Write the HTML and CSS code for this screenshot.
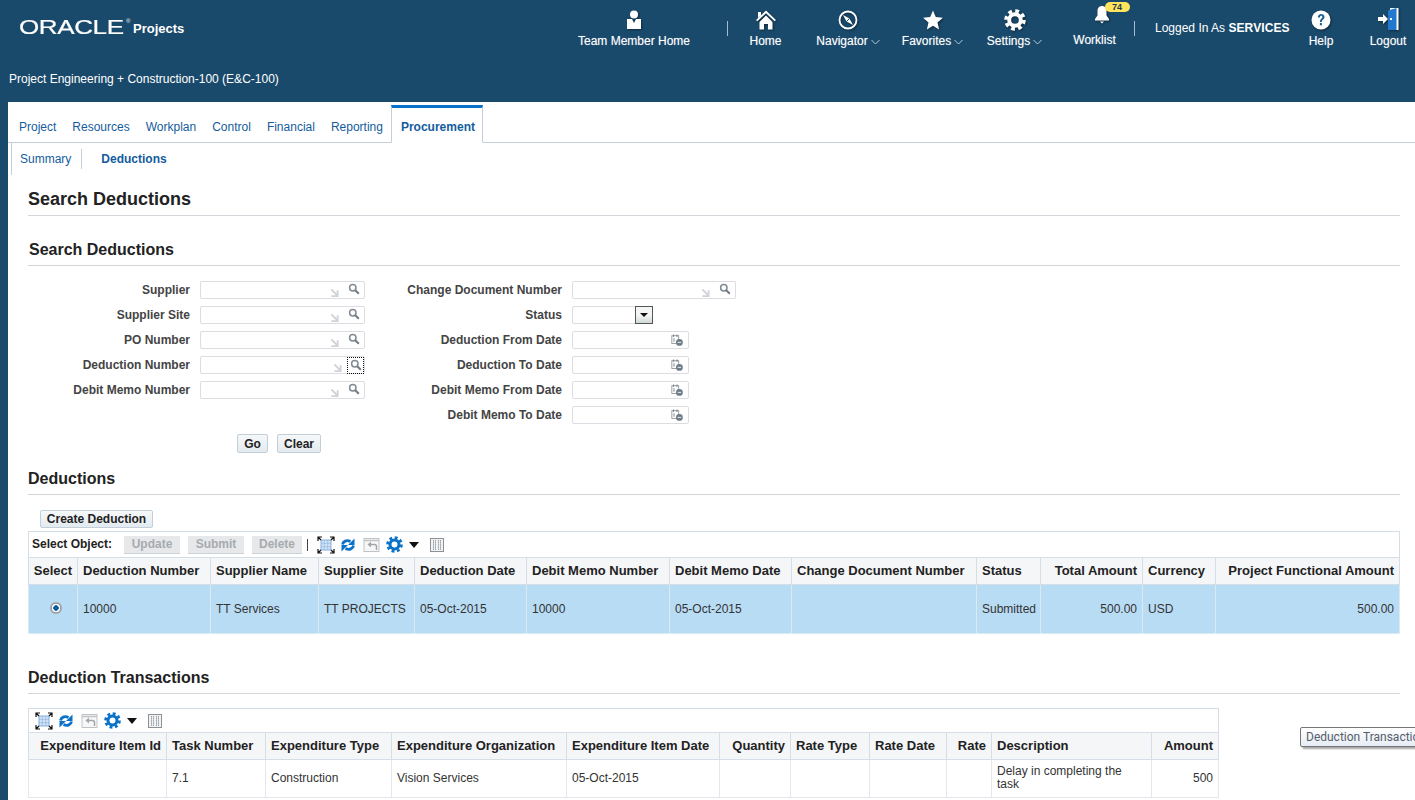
FILE: index.html
```html
<!DOCTYPE html>
<html lang="en">
<head>
<meta charset="utf-8">
<title>Search Deductions</title>
<link rel="stylesheet" href="styles.css">
</head>
<body>
<svg class="defs" width="0" height="0" aria-hidden="true">
  <symbol id="i-search" viewBox="0 0 12 12"><circle cx="4.8" cy="4.8" r="3.2" fill="none" stroke="#7f8a93" stroke-width="1.5"/><path d="M7.2 7.2l3.6 3.6" stroke="#6f7a83" stroke-width="2"/></symbol>
  <symbol id="i-arrow" viewBox="0 0 10 10"><path d="M1.5 1.5l6 6M8.5 2.5v6.500h-7" fill="none" stroke="#cfd2d6" stroke-width="2"/></symbol>
  <symbol id="i-cal" viewBox="0 0 14 14"><rect x="1" y="2" width="8" height="9" fill="#fff" stroke="#8b9298"/><path d="M3 0.500v3M7 0.500v3" stroke="#6f787f"/><path d="M3.500 5v4" stroke="#6f787f"/><circle cx="9.800" cy="9.800" r="4" fill="#6f7d88"/><path d="M7.800 9.800h4" stroke="#fff"/></symbol>
  <symbol id="i-detach" viewBox="0 0 18 18"><rect x="4" y="4" width="10" height="10" fill="#d3e3f6" stroke="#6d9fd6" stroke-width=".8"/><path d="M7.300 4v10M10.700 4v10M4 7.300h10M4 10.700h10" stroke="#7ea9da" stroke-width=".5"/><path d="M1 5V1h4M13 1h4v4M17 13v4h-4M5 17H1v-4M1 1l3 3M17 1l-3 3M17 17l-3-3M1 17l3-3" fill="none" stroke="#111" stroke-width="1.200"/></symbol>
  <symbol id="i-refresh" viewBox="0 0 14 14"><path d="M1.500 6.500C2 3.500 5.500 1.500 9.500 3.500" fill="none" stroke="#0a72c9" stroke-width="2.800"/><path d="M13.500 .5v6.500H7z" fill="#0a72c9"/><path d="M12.500 7.500C12 10.500 8.500 12.500 4.500 10.500" fill="none" stroke="#0a72c9" stroke-width="2.800"/><path d="M.5 13.500V7h6.500z" fill="#0a72c9"/></symbol>
  <symbol id="i-wrap" viewBox="0 0 16 14"><rect x=".5" y=".5" width="15" height="13" fill="#f7f7f8" stroke="#bfc3c6"/><path d="M.5 2.500h15" stroke="#bfc3c6" stroke-width="1.500"/><path d="M13 12V8.500a2 2 0 0 0-2-2H7" fill="none" stroke="#a0a6aa" stroke-width="1.500"/><path d="M7.500 3.500v6L4 6.500z" fill="#a0a6aa"/></symbol>
  <symbol id="i-gear" viewBox="0 0 20 20"><circle cx="10" cy="10" r="5.300" fill="none" stroke="currentColor" stroke-width="3.600"/><circle cx="10" cy="10" r="8.200" fill="none" stroke="currentColor" stroke-width="3.200" stroke-dasharray="3.440 3"/></symbol>
  <symbol id="i-cols" viewBox="0 0 14 14"><rect x=".5" y=".5" width="13" height="13" fill="#f1f2f3" stroke="#8a9298"/><path d="M3.500 2v10M5.500 2v10M8.500 2v10M10.500 2v10" stroke="#8a9298" stroke-width=".9" stroke-dasharray="1.500 .6"/></symbol>
  <symbol id="i-chev" viewBox="0 0 9 6"><path d="M.5 1l4 4 4-4" fill="none" stroke="#b8cbd8"/></symbol>
</svg>

<header class="app-header">
  <div class="header-top">
    <div class="brand">
      <span class="logo-box"><span class="logo">ORACLE</span><span class="logo-reg">®</span></span>
      <span class="product">Projects</span>
    </div>
    <nav class="global-nav">
      <a class="nav-item w-team">
        <svg class="nav-icon" width="20" height="22" viewBox="0 0 20 22"><circle cx="10" cy="5.500" r="4" fill="#fff"/><path d="M3 10h5l2 4 2-4h5v10H3z" fill="#fff"/></svg>
        <span>Team Member Home</span>
      </a>
      <span class="nav-sep"></span>
      <a class="nav-item w-home">
        <svg class="nav-icon" width="22" height="22" viewBox="0 0 22 22"><path d="M1 11L11 1.500 21 11l-1.300 1.300L11 4.200 2.300 12.300z" fill="#fff"/><path d="M3 3h3v3.500L3 9z" fill="#fff"/><path d="M4.500 13L11 6.500l6.500 6.500v7.500h-4.500v-5.500H9v5.500H4.500z" fill="#fff"/></svg>
        <span>Home</span>
      </a>
      <a class="nav-item w-navigator">
        <svg class="nav-icon" width="22" height="22" viewBox="0 0 22 22"><circle cx="11" cy="11" r="8.500" fill="none" stroke="#fff" stroke-width="1.800"/><path d="M6 6l6.500 3.500L16 16 9.500 12.500z" fill="#fff"/><path d="M9.500 12.500l3-3" stroke="#1a4a6b"/></svg>
        <span>Navigator<svg class="chev" width="9" height="6"><use href="#i-chev"/></svg></span>
      </a>
      <a class="nav-item w-fav">
        <svg class="nav-icon" width="22" height="22" viewBox="0 0 22 22"><path d="M11 1.500l2.800 6.600 7.100.6-5.400 4.700 1.600 7L11 16.700l-6.100 3.700 1.600-7L1.100 8.700l7.100-.6z" fill="#fff"/></svg>
        <span>Favorites<svg class="chev" width="9" height="6"><use href="#i-chev"/></svg></span>
      </a>
      <a class="nav-item w-settings">
        <svg class="nav-icon nav-gear" width="22" height="22"><use href="#i-gear"/></svg>
        <span>Settings<svg class="chev" width="9" height="6"><use href="#i-chev"/></svg></span>
      </a>
      <a class="nav-item w-worklist">
        <span class="bell-wrap">
          <svg class="nav-icon" width="16" height="20" viewBox="0 0 16 20"><path d="M8 1c3 0 4.500 2.300 4.500 5v4.500L15 14v1.500H1V14l2.500-3.500V6C3.500 3.300 5 1 8 1z" fill="#fff"/><path d="M6 16.500h4L8 18.500z" fill="#fff"/></svg>
          <span class="badge">74</span>
        </span>
        <span>Worklist</span>
      </a>
      <span class="nav-sep sep-2"></span>
      <span class="logged">Logged In As <b>SERVICES</b></span>
      <a class="nav-item w-help">
        <svg class="nav-icon" width="20" height="22" viewBox="0 0 20 22"><circle cx="10" cy="11" r="9.500" fill="#fff"/><path d="M6.800 8.500c0-5 6.700-4.500 6.700-.5 0 2.500-2.700 2.500-2.700 5H8.900c0-3.300 2.400-3.300 2.400-5 0-1.600-2.300-1.600-2.400.5z" fill="#1a5f92"/><rect x="8.900" y="14" width="2" height="2.300" fill="#1a5f92"/></svg>
        <span>Help</span>
      </a>
      <a class="nav-item w-logout">
        <svg class="nav-icon" width="22" height="24" viewBox="0 0 22 24"><path d="M13 1h8.500v22H13z" fill="#fff"/><path d="M11 3.500L19.500 1v22H11z" fill="#2079cf"/><path d="M13 11h2v2h-2z" fill="#fff"/><path d="M1 10h5V7l5 5-5 5v-3H1z" fill="#fff"/></svg>
        <span>Logout</span>
      </a>
    </nav>
  </div>
  <div class="org-name">Project Engineering + Construction-100 (E&amp;C-100)</div>
</header>

<main class="main">
  <div class="tabs">
    <a class="tab">Project</a>
    <a class="tab">Resources</a>
    <a class="tab">Workplan</a>
    <a class="tab">Control</a>
    <a class="tab">Financial</a>
    <a class="tab">Reporting</a>
    <a class="tab tab-active">Procurement</a>
  </div>
  <div class="subnav">
    <a class="sub-link">Summary</a>
    <a class="sub-link sub-active">Deductions</a>
  </div>

  <div class="content">
    <h1 class="page-title">Search Deductions</h1>

    <h2 class="section first">Search Deductions</h2>
    <div class="search-form">
      <div class="form-col left">
        <div class="field"><label>Supplier</label><span class="input lov"><svg class="arr"><use href="#i-arrow"/></svg><svg class="mag"><use href="#i-search"/></svg></span></div>
        <div class="field"><label>Supplier Site</label><span class="input lov"><svg class="arr"><use href="#i-arrow"/></svg><svg class="mag"><use href="#i-search"/></svg></span></div>
        <div class="field"><label>PO Number</label><span class="input lov"><svg class="arr"><use href="#i-arrow"/></svg><svg class="mag"><use href="#i-search"/></svg></span></div>
        <div class="field"><label>Deduction Number</label><span class="input lov"><svg class="arr"><use href="#i-arrow"/></svg><span class="focus-box"><svg class="mag"><use href="#i-search"/></svg></span></span></div>
        <div class="field"><label>Debit Memo Number</label><span class="input lov"><svg class="arr"><use href="#i-arrow"/></svg><svg class="mag"><use href="#i-search"/></svg></span></div>
      </div>
      <div class="form-col right">
        <div class="field"><label>Change Document Number</label><span class="input lov"><svg class="arr"><use href="#i-arrow"/></svg><svg class="mag"><use href="#i-search"/></svg></span></div>
        <div class="field"><label>Status</label><span class="input select"><span class="select-btn"><span class="tri"></span></span></span></div>
        <div class="field"><label>Deduction From Date</label><span class="input date"><svg class="cal"><use href="#i-cal"/></svg></span></div>
        <div class="field"><label>Deduction To Date</label><span class="input date"><svg class="cal"><use href="#i-cal"/></svg></span></div>
        <div class="field"><label>Debit Memo From Date</label><span class="input date"><svg class="cal"><use href="#i-cal"/></svg></span></div>
        <div class="field"><label>Debit Memo To Date</label><span class="input date"><svg class="cal"><use href="#i-cal"/></svg></span></div>
      </div>
    </div>
    <div class="form-actions">
      <button class="btn">Go</button>
      <button class="btn">Clear</button>
    </div>

    <h2 class="section second">Deductions</h2>
    <div class="create-row"><button class="btn">Create Deduction</button></div>
    <div class="toolbar wide">
      <span class="select-obj">Select Object:</span>
      <button class="btn-off b-update">Update</button>
      <button class="btn-off b-submit">Submit</button>
      <button class="btn-off b-delete">Delete</button>
      <span class="tb-sep"></span>
      <svg class="tb-detach"><use href="#i-detach"/></svg>
      <svg class="tb-refresh"><use href="#i-refresh"/></svg>
      <svg class="tb-wrap"><use href="#i-wrap"/></svg>
      <svg class="tb-gear"><use href="#i-gear"/></svg>
      <span class="tb-tri"></span>
      <svg class="tb-cols"><use href="#i-cols"/></svg>
    </div>
    <table class="grid grid-wide">
      <colgroup>
        <col class="c49"><col class="c133"><col class="c108"><col class="c96"><col class="c112"><col class="c143"><col class="c122"><col class="c185"><col class="c64"><col class="c102"><col class="c73"><col class="c184">
      </colgroup>
      <thead>
        <tr><th class="ctr">Select</th><th>Deduction Number</th><th>Supplier Name</th><th>Supplier Site</th><th>Deduction Date</th><th>Debit Memo Number</th><th>Debit Memo Date</th><th>Change Document Number</th><th>Status</th><th class="num">Total Amount</th><th>Currency</th><th class="num">Project Functional Amount</th></tr>
      </thead>
      <tbody>
        <tr class="selected"><td class="ctr"><span class="radio"></span></td><td>10000</td><td>TT Services</td><td>TT PROJECTS</td><td>05-Oct-2015</td><td>10000</td><td>05-Oct-2015</td><td></td><td>Submitted</td><td class="num">500.00</td><td>USD</td><td class="num">500.00</td></tr>
      </tbody>
    </table>

    <h2 class="section third">Deduction Transactions</h2>
    <div class="toolbar narrow">
      <svg class="tb-detach first-icon"><use href="#i-detach"/></svg>
      <svg class="tb-refresh"><use href="#i-refresh"/></svg>
      <svg class="tb-wrap"><use href="#i-wrap"/></svg>
      <svg class="tb-gear"><use href="#i-gear"/></svg>
      <span class="tb-tri"></span>
      <svg class="tb-cols"><use href="#i-cols"/></svg>
    </div>
    <table class="grid grid-narrow">
      <colgroup>
        <col class="c138"><col class="c99"><col class="c126"><col class="c175"><col class="c153"><col class="c71"><col class="c79"><col class="c77"><col class="c45"><col class="c160"><col class="c67">
      </colgroup>
      <thead>
        <tr><th class="num">Expenditure Item Id</th><th>Task Number</th><th>Expenditure Type</th><th>Expenditure Organization</th><th>Expenditure Item Date</th><th class="num">Quantity</th><th>Rate Type</th><th>Rate Date</th><th class="num">Rate</th><th>Description</th><th class="num">Amount</th></tr>
      </thead>
      <tbody>
        <tr class="plain"><td></td><td>7.1</td><td>Construction</td><td>Vision Services</td><td>05-Oct-2015</td><td></td><td></td><td></td><td></td><td class="desc">Delay in completing the task</td><td class="num">500</td></tr>
      </tbody>
    </table>
  </div>
</main>
<div class="tooltip">Deduction Transactions</div>
</body>
</html>
```
FILE: styles.css
```css
* { box-sizing: border-box; }
html, body { margin: 0; padding: 0; height: 800px; overflow: hidden; }
body { background: #1a4a6b; font-family: "Liberation Sans", Arial, sans-serif; font-size: 12px; color: #333; position: relative; }
.defs { position: absolute; }

/* header */
.app-header { height: 102px; color: #fff; display: flex; flex-direction: column; }
.header-top { display: flex; justify-content: space-between; height: 72px; }
.brand { display: flex; align-items: flex-start; padding: 18px 0 0 20px; }
.logo-box { display: block; width: 113px; position: relative; height: 20px; }
.logo { display: block; font-size: 20px; line-height: 19px; transform: scaleX(1.3); transform-origin: left center; letter-spacing: -.3px; margin-left: -1px; -webkit-text-stroke: .2px #fff; }
.logo-reg { position: absolute; left: 106px; top: -1px; font-size: 6px; line-height: 8px; }
.product { font-weight: bold; font-size: 13px; line-height: 22px; }
.global-nav { display: flex; align-items: flex-start; }
.nav-item { display: flex; flex-direction: column; align-items: center; height: 50px; padding-top: 9px; line-height: 14px; white-space: nowrap; text-shadow: 0 0 1px rgba(255,255,255,.4); }
.nav-icon { display: block; height: 22px; margin-bottom: 3px; filter: drop-shadow(1px 1px 1px rgba(0,0,0,.45)); }
.nav-gear { color: #fff; }
.chev { margin-left: 3px; }
.nav-sep { width: 1px; height: 15px; margin-top: 21px; background: #a7bccb; }
.w-team { width: 186px; }
.w-home { width: 75px; }
.w-navigator { width: 88px; padding-left: 2px; }
.w-fav { width: 83px; }
.w-settings { width: 81px; }
.w-worklist { width: 79px; padding-top: 3px; }
.w-worklist .nav-icon { height: 20px; width: 16px; margin-bottom: 0; }
.bell-wrap { display: block; position: relative; height: 30px; padding-top: 2px; left: 14px; margin-left: -14px; }
.badge { position: absolute; left: 11px; top: -1px; width: 25px; height: 10px; border-radius: 5px; background: #ffe45c; color: #1a3a50; font-size: 9px; font-weight: bold; line-height: 10px; text-align: center; text-shadow: none; }
.sep-2 { margin-right: 20px; }
.logged { width: 135px; padding-top: 21px; line-height: 14px; white-space: nowrap; }
.logged b { letter-spacing: .1px; }
.w-help { width: 62px; }
.w-logout { width: 54px; padding-top: 7px; margin-left: 9px; }
.w-logout .nav-icon { height: 24px; margin-bottom: 3px; }
.org-name { padding-left: 9px; line-height: 14px; }

/* main */
.main { margin-left: 8px; height: 698px; background: #fff; }
.tabs { display: flex; height: 41px; padding: 3px 0 0 3px; border-bottom: 1px solid #c4cfd9; margin-top: 0; align-items: flex-end; }
.tab { padding: 0 8px 8px; line-height: 14px; color: #145c9e; }
.tab-active { margin-left: 0; height: 38px; margin-bottom: -1px; padding: 12px 7px 0 9px; border: 1px solid #c4cfd9; border-top: 3px solid #0572ce; border-bottom: 1px solid #fff; font-weight: bold; background: #fff; }
.subnav { display: flex; height: 32px; margin-left: 3px; padding: 6px 0 0 0; border-left: 1px solid #c4cfd9; align-items: flex-start; }
.sub-link { display: block; padding: 0 10px 0 8px; height: 20px; line-height: 20px; color: #145c9e; }
.sub-link:first-child { border-right: 1px solid #c4cfd9; }
.sub-active { margin-left: 10px; padding: 0 0 0 9px; font-weight: bold; }
.content { padding: 0 15px 0 20px; }

/* headings */
.page-title { margin: 0; padding: 13px 0 5px; font-size: 18px; line-height: 22px; font-weight: bold; color: #222; border-bottom: 1px solid #d3d7db; }
.section { margin: 0; padding: 0 0 4px; font-size: 16px; line-height: 22px; font-weight: bold; color: #222; border-bottom: 1px solid #d3d7db; }
.section.first { margin-top: 23px; padding-left: 1px; }
.section.second { margin-top: 15px; }
.section.third { margin-top: 33px; }

/* form */
.search-form { display: flex; margin-top: 15px; }
.form-col { display: flex; flex-direction: column; gap: 7px; }
.form-col.left { width: 347px; }
.field { display: flex; align-items: center; height: 18px; }
.field label { text-align: right; font-weight: bold; color: #444; padding-right: 10px; white-space: nowrap; }
.left label { width: 172px; }
.right label { width: 197px; }
.input { display: flex; align-items: center; justify-content: flex-end; position: relative; height: 18px; border: 1px solid #dcdce2; border-radius: 2px; background: #fff; }
.lov { width: 165px; }
.right .lov { width: 164px; }
.select { width: 81px; }
.date { width: 117px; }
.arr { width: 9px; height: 9px; margin: 5px 9px 0 0; }
.mag { display: block; width: 12px; height: 12px; margin: -2px 4px 0 0; }
.focus-box { display: flex; align-items: center; width: 17px; height: 17px; margin: 0 0 0 -4px; border: 1px dotted #111; padding-left: 2px; }
.focus-box .mag { margin: 0; }
.cal { width: 12px; height: 12px; margin-right: 5px; }
.select-btn { display: flex; align-items: center; justify-content: center; width: 18px; height: 18px; margin: -1px -1px -1px 0; border: 1px solid #555; background: linear-gradient(#f4f6f5 50%, #cfdad4); }
.tri { width: 0; height: 0; border: 4px solid transparent; border-top: 4px solid #111; border-bottom: 0; }

.form-actions { display: flex; gap: 9px; margin: 10px 0 0 209px; }
.btn { display: block; height: 19px; padding: 0 6px; font: bold 12px/16px "Liberation Sans", Arial, sans-serif; color: #222; background: linear-gradient(#f6f8f9, #e3ebf0); border: 1px solid #c2ced8; border-radius: 2px; }
.form-actions .btn:first-child { width: 31px; }
.form-actions .btn:last-child { width: 44px; }
.create-row { margin: 15px 0 0 12px; height: 18px; }
.create-row .btn { width: 113px; height: 18px; padding: 0; }

/* toolbars */
.toolbar { display: flex; align-items: center; height: 26px; border: 1px solid #d5dde6; border-bottom: 0; background: #fff; padding-left: 3px; }
.toolbar.wide { width: 1372px; margin-top: 3px; }
.toolbar.narrow { width: 1191px; margin-top: 14px; height: 24px; padding-left: 6px; }
.select-obj { font-weight: bold; color: #222; width: 92px; padding-bottom: 2px; }
.btn-off { height: 18px; padding: 0; border: 0; border-bottom: 1px solid #ccd1d6; background: #e6e8ea; color: #a6abb0; font: bold 12px "Liberation Sans", Arial, sans-serif; }
.b-update { width: 56px; margin-right: 8px; }
.b-submit { width: 56px; margin-right: 8px; }
.b-delete { width: 50px; margin-right: 5px; }
.tb-sep { width: 1px; height: 12px; background: #444; margin-right: 9px; }
.tb-detach { width: 18px; height: 18px; margin-right: 6px; }
.tb-refresh { width: 14px; height: 14px; margin-right: 8px; }
.tb-wrap { width: 17px; height: 14px; margin-right: 6px; }
.tb-gear { width: 17px; height: 17px; color: #0a72c9; margin-right: 5px; }
.tb-tri { width: 0; height: 0; border: 5px solid transparent; border-top: 6px solid #111; border-bottom: 0; margin-right: 11px; margin-left: 1px; }
.tb-cols { width: 14px; height: 14px; }

/* tables */
.grid { border-collapse: collapse; table-layout: fixed; }
.grid-wide { width: 1372px; }
.grid-narrow { width: 1191px; }
.grid th { height: 27px; padding: 0 5px 1px; background: #f5f6f8; border: 1px solid #d5dde6; text-align: left; font-size: 13px; font-weight: bold; color: #222; white-space: nowrap; overflow: hidden; }
.grid td { padding: 0 5px 0; border: 1px solid #e3e7ec; color: #333; }
.grid th.ctr { text-align: center; padding: 0 0 1px; }
.grid td.ctr { text-align: center; padding: 0 0 3px 6px; }
.grid th.num, .grid td.num { text-align: right; }
.selected td { height: 49px; background: #b9dcf5; border-color: #dbe9f3; }
.plain td { height: 38px; padding-bottom: 1px; }
.grid td.desc { line-height: 13px; }
.radio { display: inline-block; width: 12px; height: 12px; border-radius: 50%; background: radial-gradient(circle, #0a5f9e 0 2.500px, #fff 3px 4px, #9aa3ab 4.500px); vertical-align: middle; }

.c49 { width: 49px; } .c133 { width: 133px; } .c108 { width: 108px; } .c96 { width: 96px; }
.c112 { width: 112px; } .c143 { width: 143px; } .c122 { width: 122px; } .c185 { width: 185px; }
.c64 { width: 64px; } .c102 { width: 102px; } .c73 { width: 73px; } .c184 { width: 184px; }
.c138 { width: 138px; } .c99 { width: 99px; } .c126 { width: 126px; } .c175 { width: 175px; }
.c153 { width: 153px; } .c71 { width: 71px; } .c79 { width: 79px; } .c77 { width: 77px; }
.c45 { width: 45px; } .c160 { width: 160px; } .c67 { width: 67px; }

/* tooltip */
.tooltip { position: absolute; left: 1300px; top: 727px; width: 160px; height: 20px; padding-left: 5px; line-height: 18px; font-family: Roboto, sans-serif; font-size: 12px; color: #56606b; white-space: nowrap; background: linear-gradient(#fff, #e6ecf5); border: 1px solid #767676; border-radius: 2px; box-shadow: 2px 2px 2px rgba(0,0,0,.35); }
```
